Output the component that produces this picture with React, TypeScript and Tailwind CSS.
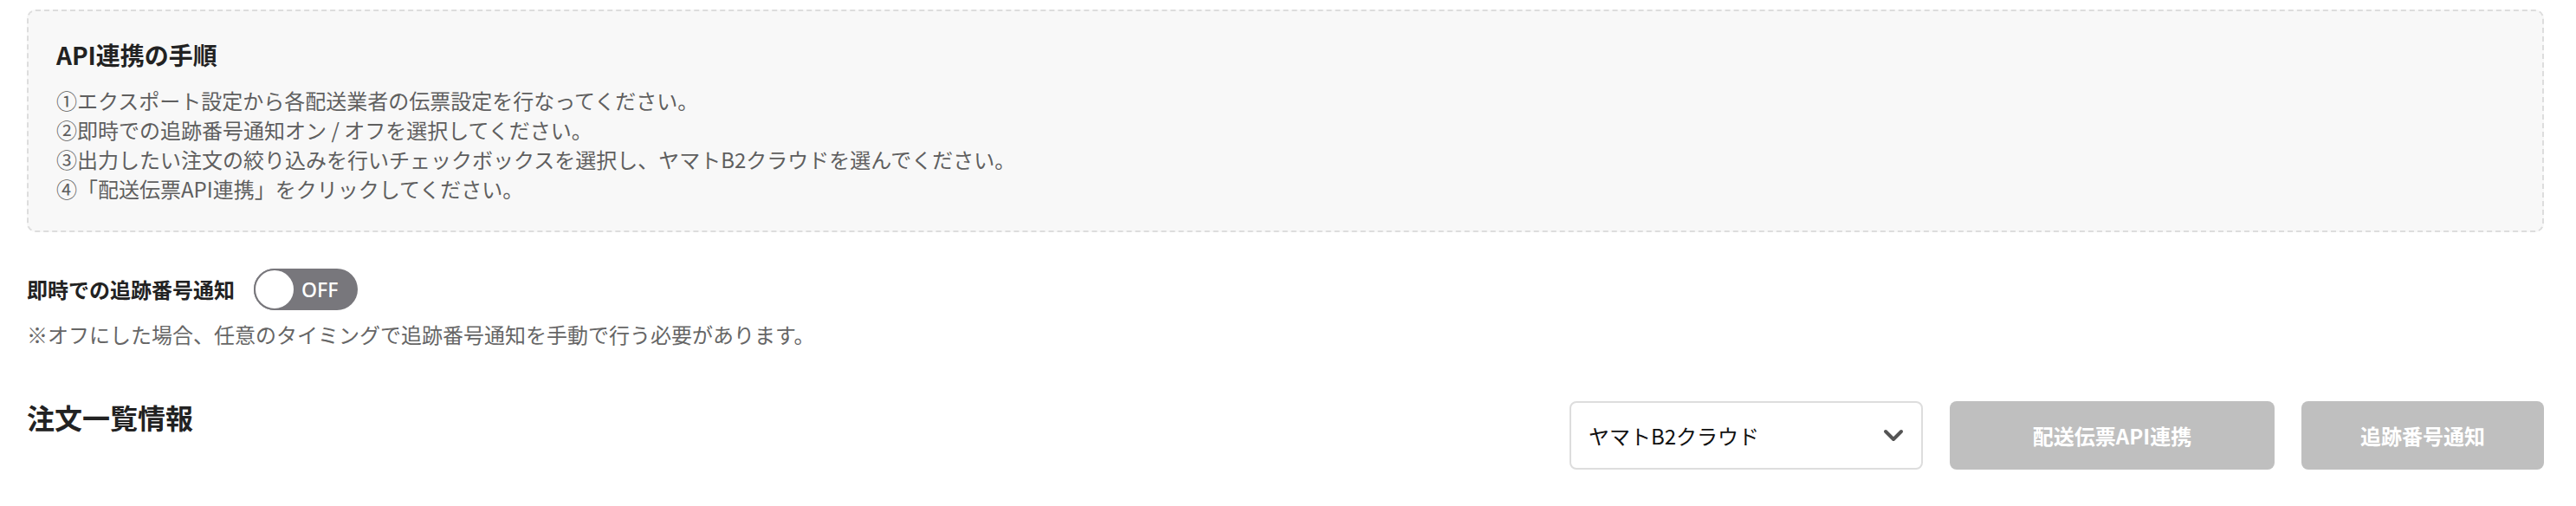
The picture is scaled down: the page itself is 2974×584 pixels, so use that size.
import React from "react";

const font = { fontFamily: '"Noto Sans CJK JP", "Noto Sans", sans-serif' };

export default function App() {
  return (
    <div className="w-full bg-white pl-[31px] pr-[37px] pt-[11px]" style={font}>
      <div className="rounded-[10px] border-2 border-dashed border-[#dddddd] bg-[#f8f8f8] px-[32px] pt-[32px] pb-[31px]">
        <h2 className="text-[28px] leading-[36px] font-bold text-[#222222]">API連携の手順</h2>
        <div className="mt-[18px] text-[24px] leading-[34px] text-[#5f5f5f]">
          <p>①エクスポート設定から各配送業者の伝票設定を行なってください。</p>
          <p>②即時での追跡番号通知オン / オフを選択してください。</p>
          <p>③出力したい注文の絞り込みを行いチェックボックスを選択し、ヤマトB2クラウドを選んでください。</p>
          <p>④「配送伝票API連携」をクリックしてください。</p>
        </div>
      </div>

      <div className="mt-[42px] flex items-center gap-[22px]">
        <span className="text-[24px] leading-[34px] font-bold text-[#222222]">即時での追跡番号通知</span>
        <div className="flex h-[48px] w-[120px] items-center rounded-full bg-[#78777c]">
          <div className="h-[48px] w-[48px] rounded-full border-2 border-[#78777c] bg-white" />
          <span className="ml-[7px] text-[23px] font-medium leading-none text-white" style={{ fontFamily: '"Noto Sans", sans-serif' }}>OFF</span>
        </div>
      </div>
      <p className="mt-[11px] text-[24px] leading-[34px] text-[#666666]">※オフにした場合、任意のタイミングで追跡番号通知を手動で行う必要があります。</p>

      <div className="mt-[60px] flex items-start">
        <h2 className="text-[32px] leading-[36px] font-bold text-[#222222]">注文一覧情報</h2>
        <div className="ml-auto flex items-center gap-[31px]">
          <div className="flex h-[79px] w-[408px] items-center justify-between rounded-[8px] border-2 border-[#dddddd] bg-white pl-[20px] pr-[20px]">
            <span className="text-[24px] text-[#111111]">ヤマトB2クラウド</span>
            <svg width="24" height="16" viewBox="0 0 24 16" fill="none">
              <path d="M3 3 L12 12 L21 3" stroke="#555555" strokeWidth="4" strokeLinecap="round" strokeLinejoin="round" />
            </svg>
          </div>
          <button className="flex h-[79px] w-[375px] items-center justify-center rounded-[8px] bg-[#bfbfbf] text-[24px] font-bold text-white">配送伝票API連携</button>
          <button className="flex h-[79px] w-[280px] items-center justify-center rounded-[8px] bg-[#bfbfbf] text-[24px] font-bold text-white">追跡番号通知</button>
        </div>
      </div>
    </div>
  );
}
